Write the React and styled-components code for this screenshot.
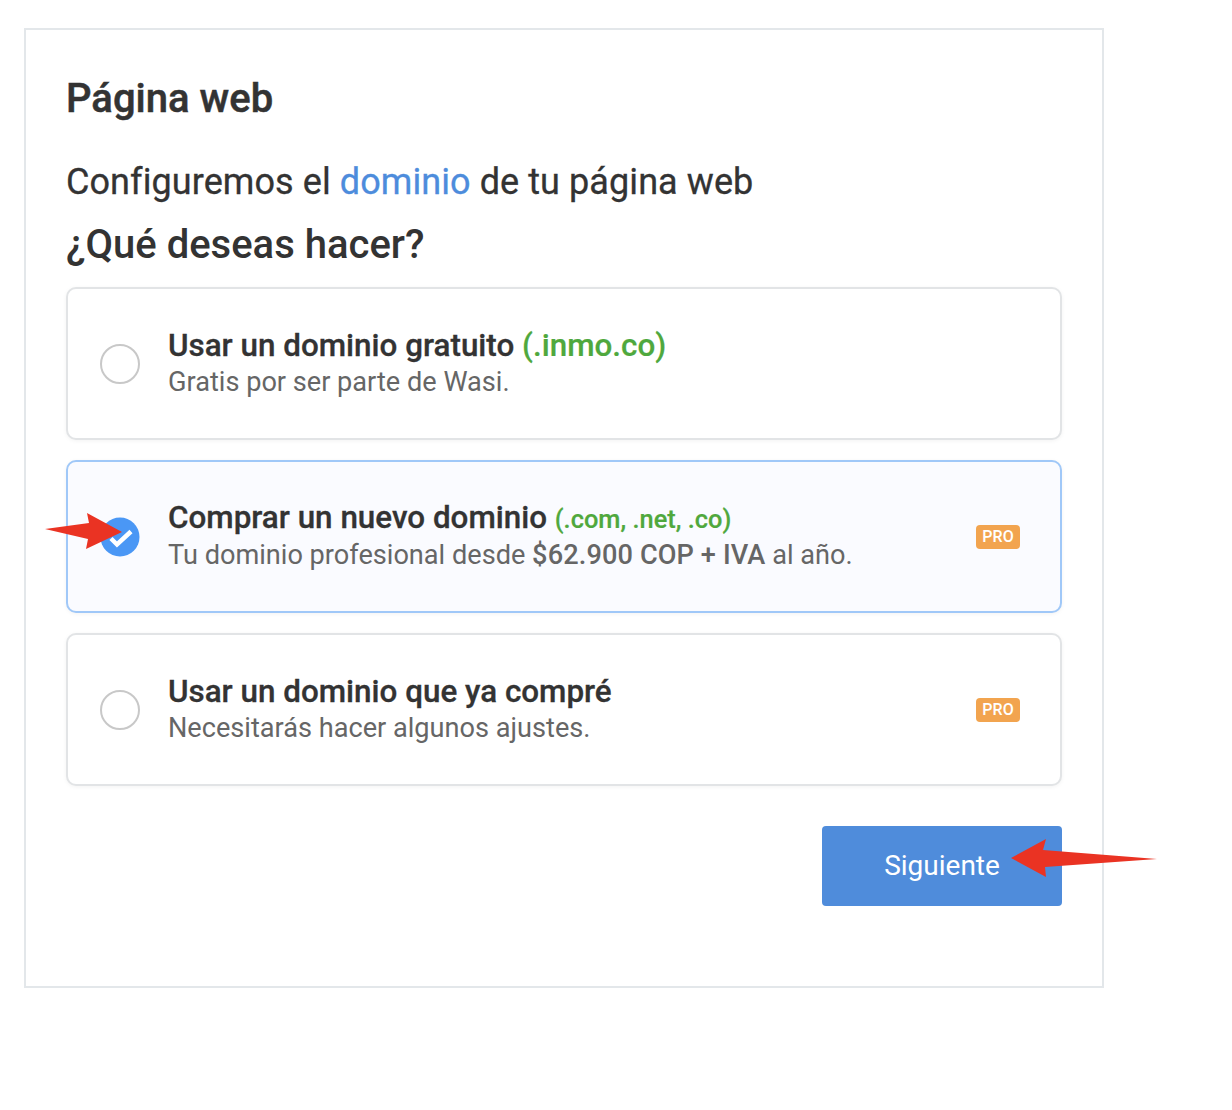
import React from "react";
import styled, { createGlobalStyle } from "styled-components";

const Global = createGlobalStyle`
  html, body { margin: 0; padding: 0; background: #fff; }
  body { font-family: Roboto, "Liberation Sans", sans-serif; color: #333; }
`;
const Page = styled.div`
  position: relative;
  width: 1232px;
  height: 1110px;
  padding: 28px 0 0 24px;
  box-sizing: border-box;
  overflow: hidden;
`;
const Card = styled.section`
  width: 1080px;
  height: 960px;
  box-sizing: border-box;
  border: 2px solid #e3e7ea;
  padding: 41px 40px 0;
`;
const Title = styled.h1`
  margin: 0;
  font-size: 40px;
  line-height: 56px;
  font-weight: 500;
  color: #333;
  -webkit-text-stroke: 0.5px #333;
`;
const Subtitle = styled.p`
  margin: 30px 0 0;
  font-size: 36px;
  line-height: 50px;
  font-weight: 400;
  letter-spacing: 0.08px;
  color: #333;
  -webkit-text-stroke: 0.3px #333;
`;
const Link = styled.span`
  color: #4d8cdc;
  -webkit-text-stroke: 0.3px #4d8cdc;
`;
const Question = styled.h2`
  margin: 13px 0 0;
  font-size: 40px;
  line-height: 50px;
  font-weight: 500;
  color: #333;
`;
const Options = styled.div`
  display: flex;
  flex-direction: column;
  gap: 20px;
  margin-top: 17px;
  width: 996px;
`;
const Option = styled.div`
  display: flex;
  align-items: center;
  box-sizing: border-box;
  height: 153px;
  padding: 0 40px 0 32px;
  border-radius: 10px;
  border: 2px solid ${(p) => (p.$active ? "#a0c8f8" : "#e2e4e6")};
  background: ${(p) => (p.$active ? "#fafbff" : "#fff")};
  box-shadow: 0 1px 4px rgba(0, 0, 0, 0.05);
`;
const Radio = styled.span`
  flex: none;
  width: 40px;
  height: 40px;
  box-sizing: border-box;
  border-radius: 50%;
  border: 2px solid #c8c8c8;
  background: #fff;
`;
const Checked = styled.svg`
  flex: none;
  width: 40px;
  height: 40px;
  display: block;
`;
const Body = styled.div`
  flex: 1;
  margin-left: 28px;
`;
const Heading = styled.div`
  font-size: 31.4px;
  line-height: ${(p) => p.$lh || 37}px;
  font-weight: 500;
  color: #333;
  -webkit-text-stroke: 0.3px #333;
`;
const Green = styled.span`
  color: #4fa83d;
  font-weight: 500;
  font-size: ${(p) => p.$size || 31.4}px;
  -webkit-text-stroke: 0.2px #4fa83d;
`;
const Desc = styled.div`
  font-size: 27.15px;
  line-height: 36px;
  color: #666;
  b { font-weight: 500; letter-spacing: 0.12px; }
`;
const Pro = styled.span`
  flex: none;
  width: 44px;
  height: 24px;
  border-radius: 4px;
  background: #f2a44f;
  color: #fff;
  font-size: 16px;
  font-weight: 500;
  line-height: 24px;
  text-align: center;
`;
const Footer = styled.div`
  display: flex;
  justify-content: flex-end;
  width: 996px;
  margin-top: 40px;
`;
const Button = styled.button`
  width: 240px;
  height: 80px;
  border: 0;
  border-radius: 4px;
  background: #4f8cdb;
  color: #fff;
  font-family: inherit;
  font-size: 28px;
  padding: 0 0 2px;
`;
const Arrow = styled.svg`
  position: absolute;
  left: 0;
  top: 0;
  width: 1232px;
  height: 1110px;
  pointer-events: none;
`;

export default function App() {
  return (
    <Page>
      <Global />
      <Card>
        <Title>Página web</Title>
        <Subtitle>
          Configuremos el <Link>dominio</Link> de tu página web
        </Subtitle>
        <Question>¿Qué deseas hacer?</Question>
        <Options>
          <Option>
            <Radio />
            <Body>
              <Heading>
                Usar un dominio gratuito <Green>(.inmo.co)</Green>
              </Heading>
              <Desc>Gratis por ser parte de Wasi.</Desc>
            </Body>
          </Option>
          <Option $active>
            <Checked viewBox="0 0 40 40">
              <circle cx="20" cy="20" r="19.5" fill="#4a97f5" />
              <path d="M11 21.5l6 6 14-13" fill="none" stroke="#fff" strokeWidth="4.5" />
            </Checked>
            <Body>
              <Heading $lh={35}>
                Comprar un nuevo dominio <Green $size={25.4}>(.com, .net, .co)</Green>
              </Heading>
              <Desc>
                Tu dominio profesional desde <b>$62.900 COP + IVA</b> al año.
              </Desc>
            </Body>
            <Pro>PRO</Pro>
          </Option>
          <Option>
            <Radio />
            <Body>
              <Heading>Usar un dominio que ya compré</Heading>
              <Desc>Necesitarás hacer algunos ajustes.</Desc>
            </Body>
            <Pro>PRO</Pro>
          </Option>
        </Options>
        <Footer>
          <Button>Siguiente</Button>
        </Footer>
      </Card>
      <Arrow viewBox="0 0 1232 1110">
        <polygon points="45,529 89,523 87,513 122,532 86,549 88,539" fill="#ea3323" />
        <polygon points="1157,859 1045,867 1046,877 1011,858 1046,839 1043,850" fill="#ea3323" />
      </Arrow>
    </Page>
  );
}
